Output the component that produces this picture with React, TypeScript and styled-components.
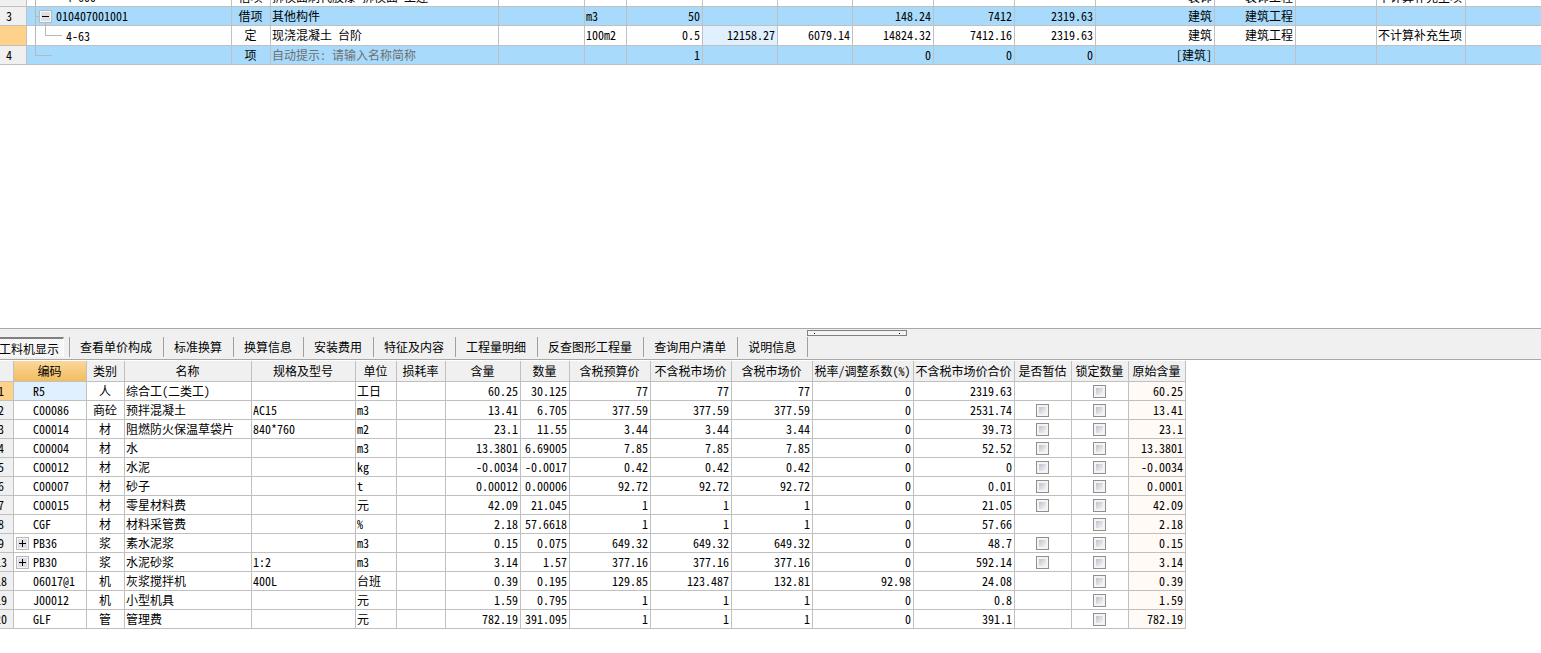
import React from "react";
import styled, { createGlobalStyle, css } from "styled-components";

type Align = "left" | "center" | "right";

const LINE = "#c0c0c0";

const GlobalStyle = createGlobalStyle`
  *, *::before, *::after { box-sizing: border-box; }
  html, body, #root { height: 100%; }
  body {
    margin: 0;
    background: #fff;
    color: #000;
    font-family: "Noto Sans CJK SC", sans-serif;
    font-size: 12px;
    line-height: 16px;
    font-feature-settings: "hwid";
  }
  button, input { font: inherit; font-feature-settings: inherit; color: inherit; }
`;

const Page = styled.div`
  display: flex;
  flex-direction: column;
  min-height: 100%;
  overflow: hidden;
`;

const EstimatePane = styled.section`
  height: 328px;
  overflow: hidden;
`;

const EstimateTable = styled.table`
  width: 100%;
  margin-top: -12px;
  table-layout: fixed;
  border-collapse: separate;
  border-spacing: 0;
`;

const cellBase = css`
  height: 19px;
  padding: 0 2px 0 1px;
  border-right: 1px solid ${LINE};
  border-bottom: 1px solid ${LINE};
  font-weight: 400;
  line-height: 16px;
  white-space: nowrap;
  overflow: hidden;
  vertical-align: middle;
`;

const Cell = styled.td<{ $align?: Align; $bg?: string; $muted?: boolean }>`
  ${cellBase}
  text-align: ${(p) => p.$align ?? "left"};
  ${(p) => p.$bg && `background: ${p.$bg};`}
  ${(p) => p.$muted && "color: #707070;"}
`;

const EstimateRow = styled.tr<{ $band?: boolean; $tall?: boolean }>`
  background: ${(p) => (p.$band ? "#a8dbfb" : "#fff")};
  & > * { height: ${(p) => (p.$tall ? 20 : 19)}px; }
  & > ${Cell} { padding-bottom: ${(p) => (p.$tall ? 2 : 0)}px; }
  & > *:last-child { border-right: 0; }
`;

const RowHead = styled.th<{ $current?: boolean }>`
  ${cellBase}
  padding: 0 6px;
  text-align: left;
  background: ${(p) => (p.$current ? "#ffd28b" : "#f0f0f0")};
`;

const TreeCell = styled.td`
  ${cellBase}
  padding: 0;
`;

const TreeItem = styled.div<{ $deep?: boolean }>`
  display: flex;
  align-items: center;
  gap: ${(p) => (p.$deep ? 3 : 4)}px;
  height: 100%;
`;

const TreeLines = styled.svg`
  display: block;
  flex: none;
`;

const Workspace = styled.section`
  flex: 1;
  background: #fff;
`;

const TabBar = styled.div`
  display: flex;
  flex-direction: column;
  height: 32px;
  border-top: 1px solid #a8a8a8;
  border-bottom: 1px solid #a8a8a8;
  background: #f0f0f0;
`;

const SplitterRow = styled.div`
  display: flex;
  height: 8px;
  padding: 1px 0 0 807px;
`;

const SplitterGrip = styled.div`
  display: flex;
  justify-content: space-between;
  align-items: center;
  width: 100px;
  height: 6px;
  padding: 0 6px;
  border: 1px solid #808080;
  background: #f4f4f4;
  &::before, &::after {
    content: "";
    width: 1px;
    height: 1px;
    background: #000080;
  }
`;

const Tabs = styled.nav`
  display: flex;
  height: 20px;
`;

const TabSlot = styled.div<{ $active?: boolean }>`
  display: flex;
  flex: none;
  border-right: 1px solid #a0a0a0;
  ${(p) => p.$active && "margin-left: -5px; padding-right: 5px;"}
`;

const Tab = styled.button<{ $active?: boolean }>`
  padding: 0 11px 0 10px;
  border: 0;
  background: transparent;
  line-height: 20px;
  white-space: nowrap;
  ${(p) =>
    p.$active &&
    css`
      padding: 0 4px;
      border-top: 2px solid #808080;
      border-right: 1px solid #fff;
      background: repeating-conic-gradient(#fff 0 25%, #f0f0f0 0 50%) 0 0 / 2px 2px;
    `}
`;

const ResourceTable = styled.table`
  width: 1195px;
  margin: 1px 0 0 -9px;
  table-layout: fixed;
  border-collapse: separate;
  border-spacing: 0;
`;

const ColHead = styled.th<{ $sorted?: boolean }>`
  ${cellBase}
  height: 21px;
  padding: 0 1px 0 0;
  text-align: center;
  background: ${(p) =>
    p.$sorted ? "linear-gradient(#fad79a, #f1bd60)" : "#f0f0f0"};
`;

const Index = styled(RowHead)`
  padding: 0 2px 0 0;
  text-align: center;
`;

const CodeCell = styled.td<{ $current?: boolean }>`
  ${cellBase}
  padding: 0 0 0 2px;
  ${(p) => p.$current && "background: #e0f0ff;"}
`;

const CodeItem = styled.div`
  display: flex;
  align-items: center;
`;

const ToggleSlot = styled.span`
  display: flex;
  flex: none;
  width: 17px;
`;

const Toggle = styled.button`
  display: block;
  width: 13px;
  height: 13px;
  padding: 0;
  border: 0;
  background: transparent;
`;

const Check = styled.input`
  appearance: none;
  display: block;
  width: 13px;
  height: 13px;
  margin: 0 auto;
  border: 1px solid #8e8f8f;
  background: linear-gradient(135deg, #bcc2ce, #f6f6f6) content-box, #f4f4f4;
  padding: 2px;
`;

const FoldIcon = () => (
  <svg width="13" height="13" viewBox="0 0 13 13" shapeRendering="crispEdges" aria-hidden="true">
    <rect x="0.5" y="0.5" width="12" height="12" fill="#f6f6f6" stroke="#b8b8b8" />
    <rect x="2" y="2" width="9" height="9" fill="#dcdfe6" />
    <path d="M3 6.5h7M6.5 3v7" stroke="#000" />
  </svg>
);

type Branch = "child" | "open" | "last" | "end";

const Tree = ({ kind }: { kind: Branch }) => {
  const width = kind === "open" ? 25 : kind === "end" ? 26 : 36;
  return (
    <TreeLines width={width} height={kind === "last" ? 19 : 18} shapeRendering="crispEdges" aria-hidden="true">
      <g stroke="#b8b8b8" fill="none">
        {kind === "child" && <path d="M8.5 0v18" />}
        {kind === "open" && (
          <>
            <path d="M8.5 0v18M9 9.5h4M18.5 16v2" />
            <rect x="12.5" y="3.5" width="12" height="12" fill="#f6f6f6" />
            <rect x="14" y="5" width="9" height="9" fill="#dcdfe6" stroke="none" />
            <path d="M15 9.5h7" stroke="#000" />
          </>
        )}
        {kind === "last" && <path d="M8.5 0v19M18.5 0v10M18 9.5h17" />}
        {kind === "end" && <path d="M8.5 0v10M8 9.5h17" />}
      </g>
    </TreeLines>
  );
};

interface Estimate {
  no: string;
  branch: Branch;
  code: string;
  kind: string;
  name: string;
  unit: string;
  values: string[];
  trade: string;
  project: string;
  note: string;
  band?: boolean;
  current?: boolean;
}

const estimates: Estimate[] = [
  { no: "", branch: "child", code: "4-600", kind: "借项", name: "拆模面刷代胶漆 拆模面 工连", unit: "", values: ["", "", "", "", "", ""], trade: "装饰", project: "装饰工程", note: "不计算补充生项" },
  { no: "3", branch: "open", code: "010407001001", kind: "借项", name: "其他构件", unit: "m3", values: ["50", "", "", "148.24", "7412", "2319.63"], trade: "建筑", project: "建筑工程", note: "", band: true },
  { no: "", branch: "last", code: "4-63", kind: "定", name: "现浇混凝土 台阶", unit: "100m2", values: ["0.5", "12158.27", "6079.14", "14824.32", "7412.16", "2319.63"], trade: "建筑", project: "建筑工程", note: "不计算补充生项", current: true },
  { no: "4", branch: "end", code: "", kind: "项", name: "自动提示: 请输入名称简称", unit: "", values: ["1", "", "", "0", "0", "0"], trade: "[建筑]", project: "", note: "", band: true },
];

const estimateCols = [27, 205, 39, 228, 86, 42, 76, 75, 75, 81, 81, 81, 119, 81, 81, 89];

const tabs = ["工料机显示", "查看单价构成", "标准换算", "换算信息", "安装费用", "特征及内容", "工程量明细", "反查图形工程量", "查询用户清单", "说明信息"];

const resourceCols: [string, number][] = [
  ["", 23], ["编码", 73], ["类别", 38], ["名称", 127], ["规格及型号", 104], ["单位", 41],
  ["损耗率", 49], ["含量", 75], ["数量", 49], ["含税预算价", 81], ["不含税市场价", 81],
  ["含税市场价", 81], ["税率/调整系数(%)", 101], ["不含税市场价合价", 101], ["是否暂估", 57],
  ["锁定数量", 57], ["原始含量", 57],
];

interface Resource {
  no: string;
  code: string;
  kind: string;
  name: string;
  spec?: string;
  unit: string;
  values: string[];
  original: string;
  estimable?: boolean;
  foldable?: boolean;
}

const resources: Resource[] = [
  { no: "1", code: "R5", kind: "人", name: "综合工(二类工)", unit: "工日", values: ["60.25", "30.125", "77", "77", "77", "0", "2319.63"], original: "60.25" },
  { no: "2", code: "C00086", kind: "商砼", name: "预拌混凝土", spec: "AC15", unit: "m3", values: ["13.41", "6.705", "377.59", "377.59", "377.59", "0", "2531.74"], original: "13.41", estimable: true },
  { no: "3", code: "C00014", kind: "材", name: "阻燃防火保温草袋片", spec: "840*760", unit: "m2", values: ["23.1", "11.55", "3.44", "3.44", "3.44", "0", "39.73"], original: "23.1", estimable: true },
  { no: "4", code: "C00004", kind: "材", name: "水", unit: "m3", values: ["13.3801", "6.69005", "7.85", "7.85", "7.85", "0", "52.52"], original: "13.3801", estimable: true },
  { no: "5", code: "C00012", kind: "材", name: "水泥", unit: "kg", values: ["-0.0034", "-0.0017", "0.42", "0.42", "0.42", "0", "0"], original: "-0.0034", estimable: true },
  { no: "6", code: "C00007", kind: "材", name: "砂子", unit: "t", values: ["0.00012", "0.00006", "92.72", "92.72", "92.72", "0", "0.01"], original: "0.0001", estimable: true },
  { no: "7", code: "C00015", kind: "材", name: "零星材料费", unit: "元", values: ["42.09", "21.045", "1", "1", "1", "0", "21.05"], original: "42.09", estimable: true },
  { no: "8", code: "CGF", kind: "材", name: "材料采管费", unit: "%", values: ["2.18", "57.6618", "1", "1", "1", "0", "57.66"], original: "2.18" },
  { no: "9", code: "PB36", kind: "浆", name: "素水泥浆", unit: "m3", values: ["0.15", "0.075", "649.32", "649.32", "649.32", "0", "48.7"], original: "0.15", estimable: true, foldable: true },
  { no: "13", code: "PB30", kind: "浆", name: "水泥砂浆", spec: "1:2", unit: "m3", values: ["3.14", "1.57", "377.16", "377.16", "377.16", "0", "592.14"], original: "3.14", estimable: true, foldable: true },
  { no: "18", code: "06017@1", kind: "机", name: "灰浆搅拌机", spec: "400L", unit: "台班", values: ["0.39", "0.195", "129.85", "123.487", "132.81", "92.98", "24.08"], original: "0.39" },
  { no: "19", code: "J00012", kind: "机", name: "小型机具", unit: "元", values: ["1.59", "0.795", "1", "1", "1", "0", "0.8"], original: "1.59" },
  { no: "20", code: "GLF", kind: "管", name: "管理费", unit: "元", values: ["782.19", "391.095", "1", "1", "1", "0", "391.1"], original: "782.19" },
];

export default function App() {
  return (
    <>
      <GlobalStyle />
      <Page>
        <EstimatePane>
          <EstimateTable>
            <colgroup>
              {estimateCols.map((w, i) => <col key={i} width={w} />)}
              <col />
            </colgroup>
            <tbody>
              {estimates.map((r, i) => (
                <EstimateRow key={i} $band={r.band} $tall={r.current}>
                  <RowHead scope="row" $current={r.current}>{r.no}</RowHead>
                  <TreeCell>
                    <TreeItem $deep={r.branch !== "open"}>
                      <Tree kind={r.branch} />
                      {r.code}
                    </TreeItem>
                  </TreeCell>
                  <Cell $align="center">{r.kind}</Cell>
                  <Cell $muted={r.branch === "end"}>{r.name}</Cell>
                  <Cell />
                  <Cell>{r.unit}</Cell>
                  {r.values.map((v, j) => (
                    <Cell key={j} $align="right" $bg={r.current && j === 1 ? "#e0f0ff" : undefined}>{v}</Cell>
                  ))}
                  <Cell $align="right">{r.trade}</Cell>
                  <Cell $align="right">{r.project}</Cell>
                  <Cell />
                  <Cell>{r.note}</Cell>
                  <Cell />
                </EstimateRow>
              ))}
            </tbody>
          </EstimateTable>
        </EstimatePane>
        <TabBar>
          <SplitterRow><SplitterGrip /></SplitterRow>
          <Tabs>
            {tabs.map((t, i) => (
              <TabSlot key={t} $active={i === 0}>
                <Tab type="button" $active={i === 0}>{t}</Tab>
              </TabSlot>
            ))}
          </Tabs>
        </TabBar>
        <Workspace>
          <ResourceTable>
            <colgroup>
              {resourceCols.map(([, w], i) => <col key={i} width={w} />)}
            </colgroup>
            <thead>
              <tr>
                {resourceCols.map(([label], i) => (
                  <ColHead key={i} scope="col" $sorted={i === 1}>{label}</ColHead>
                ))}
              </tr>
            </thead>
            <tbody>
              {resources.map((r, i) => (
                <tr key={r.no}>
                  <Index scope="row" $current={i === 0}>{r.no}</Index>
                  <CodeCell $current={i === 0}>
                    <CodeItem>
                      <ToggleSlot>
                        {r.foldable && <Toggle type="button" aria-label={`展开 ${r.code}`}><FoldIcon /></Toggle>}
                      </ToggleSlot>
                      {r.code}
                    </CodeItem>
                  </CodeCell>
                  <Cell $align="center">{r.kind}</Cell>
                  <Cell>{r.name}</Cell>
                  <Cell>{r.spec}</Cell>
                  <Cell>{r.unit}</Cell>
                  <Cell />
                  {r.values.map((v, j) => <Cell key={j} $align="right">{v}</Cell>)}
                  <Cell>{r.estimable && <Check type="checkbox" aria-label={`${r.name} 是否暂估`} />}</Cell>
                  <Cell><Check type="checkbox" aria-label={`${r.name} 锁定数量`} /></Cell>
                  <Cell $align="right" $bg="#fffaf5">{r.original}</Cell>
                </tr>
              ))}
            </tbody>
          </ResourceTable>
        </Workspace>
      </Page>
    </>
  );
}
